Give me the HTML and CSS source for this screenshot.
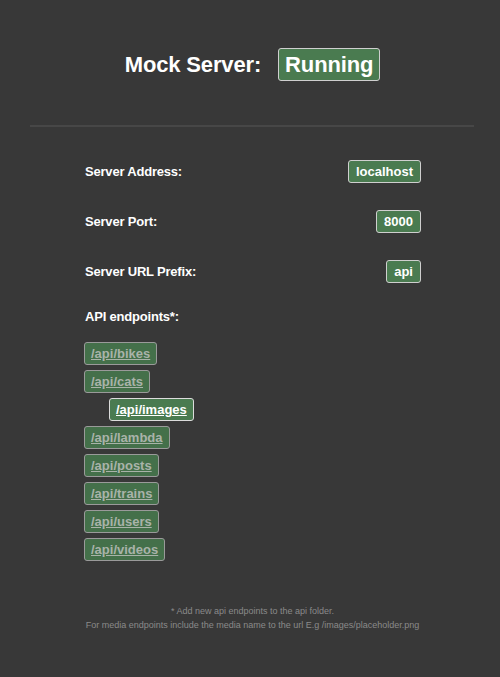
FILE: index.html
```html
<!DOCTYPE html>
<html>
<head>
<meta charset="utf-8">
<link rel="stylesheet" href="styles.css">
</head>
<body>
<div class="page">
  <h1 class="title">Mock Server: <span class="badge badge-lg">Running</span></h1>
  <hr class="divider">
  <div class="info">
    <div class="row"><span class="label">Server Address:</span><span class="badge">localhost</span></div>
    <div class="row"><span class="label">Server Port:</span><span class="badge">8000</span></div>
    <div class="row"><span class="label">Server URL Prefix:</span><span class="badge">api</span></div>
    <div class="label endpoints-title">API endpoints*:</div>
    <ul class="endpoints">
      <li><a class="ep" href="#">/api/bikes</a></li>
      <li><a class="ep" href="#">/api/cats</a></li>
      <li class="nested"><a class="ep ep-active" href="#">/api/images</a></li>
      <li><a class="ep" href="#">/api/lambda</a></li>
      <li><a class="ep" href="#">/api/posts</a></li>
      <li><a class="ep" href="#">/api/trains</a></li>
      <li><a class="ep" href="#">/api/users</a></li>
      <li><a class="ep" href="#">/api/videos</a></li>
    </ul>
  </div>
  <div class="footer">
    <div>* Add new api endpoints to the api folder.</div>
    <div>For media endpoints include the media name to the url E.g /images/placeholder.png</div>
  </div>
</div>
</body>
</html>
```
FILE: styles.css
```css
html, body {
  margin: 0;
  padding: 0;
  background: #383838;
  height: 100%;
}
body {
  font-family: "Liberation Sans", Arial, sans-serif;
  color: #ffffff;
}
.page {
  width: 500px;
  padding-top: 48px;
}
.title {
  margin: 0;
  font-size: 22px;
  font-weight: bold;
  text-align: center;
  line-height: 33px;
  display: flex;
  justify-content: center;
  align-items: center;
  gap: 17px;
  padding-left: 5px;
  letter-spacing: -0.15px;
}
.badge {
  display: inline-block;
  background: #4a7b50;
  border: 1px solid #cfcfcf;
  border-radius: 3px;
  color: #fff;
  font-weight: bold;
  font-size: 13px;
  line-height: 21px;
  padding: 0 7px;
}
.badge-lg {
  font-size: 22px;
  line-height: 31px;
  padding: 0 6px;
}
.divider {
  margin: 44px 26px 0 30px;
  border: none;
  height: 2px;
  background: #474747;
}
.info {
  margin: 32px 79px 0 85px;
}
.row {
  display: flex;
  justify-content: space-between;
  align-items: center;
  height: 25px;
  margin-bottom: 25px;
}
.label {
  font-size: 13px;
  font-weight: bold;
  letter-spacing: -0.2px;
}
.endpoints-title {
  margin-top: 0;
  line-height: 15px;
}
.endpoints {
  list-style: none;
  margin: 18px 0 0 -1px;
  padding: 0;
  display: flex;
  flex-direction: column;
  gap: 5px;
  align-items: flex-start;
}
.endpoints li.nested {
  margin-left: 25px;
}
.ep {
  display: inline-block;
  background: #44704a;
  border: 1px solid #9a9a9a;
  border-radius: 3px;
  color: #a9b3a9;
  font-size: 13px;
  font-weight: bold;
  line-height: 21px;
  padding: 0 6px;
  text-decoration: underline;
}
.ep-active {
  background: #4a7b50;
  border-color: #dcdcdc;
  color: #ffffff;
}
.footer {
  margin-top: 43px;
  text-align: center;
  font-size: 9px;
  color: #8a8a8a;
  line-height: 14px;
  padding-left: 5px;
}
```
